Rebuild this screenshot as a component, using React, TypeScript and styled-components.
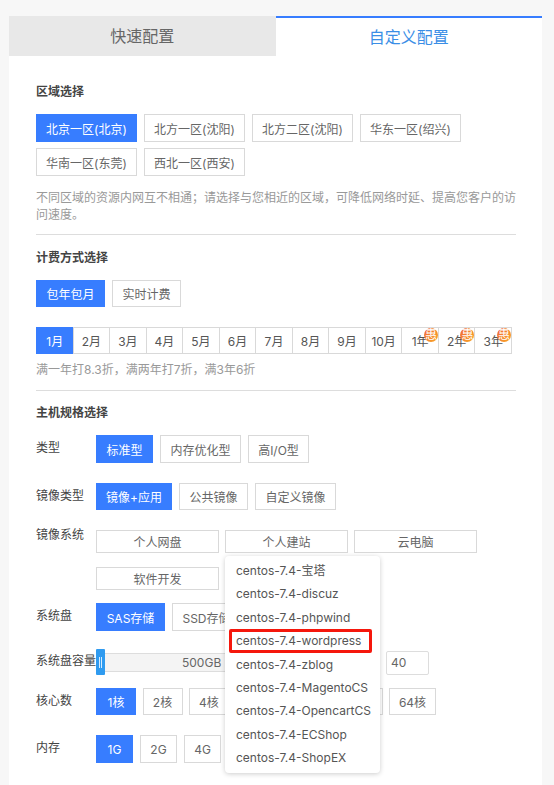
import React from "react";
import styled, { createGlobalStyle } from "styled-components";

const Global = createGlobalStyle`
  html, body { margin: 0; padding: 0; height: 785px; overflow: hidden; background: #f7f7f7; }
  body { font-family: Inter, "Noto Sans CJK SC", sans-serif; font-size: 12px; color: #666; }
  * { box-sizing: border-box; }
`;

const Page = styled.div`
  width: 533px;
  height: 769px;
  margin: 16px 0 0 9px;
  background: #fff;
  overflow: hidden;
`;
const Tabs = styled.div`
  display: flex;
  height: 40px;
`;
const Tab = styled.div<{ $active?: boolean }>`
  flex: 1;
  display: flex;
  align-items: center;
  justify-content: center;
  font-size: 16px;
  padding-bottom: ${(p) => (p.$active ? "3px" : "3px")};
  color: ${(p) => (p.$active ? "#3a8ee6" : "#666")};
  background: ${(p) => (p.$active ? "#fff" : "#e8e8e8")};
  border-top: ${(p) => (p.$active ? "2px solid #377dff" : "none")};
`;
const Body = styled.div`
  padding: 25px 26px 0 27px;
  display: flex;
  flex-direction: column;
`;
const Title = styled.div<{ $mt?: number }>`
  height: 20px;
  line-height: 22px;
  font-weight: 700;
  color: #444;
  margin-top: ${(p) => p.$mt ?? 0}px;
`;
const Wrap = styled.div<{ $mt?: number }>`
  display: flex;
  flex-wrap: wrap;
  gap: 6px 7px;
  margin-top: ${(p) => p.$mt ?? 0}px;
`;
const Chip = styled.div<{ $w: number; $h?: number; $active?: boolean }>`
  width: ${(p) => p.$w}px;
  height: ${(p) => p.$h ?? 28}px;
  flex: none;
  display: flex;
  align-items: center;
  justify-content: center;
  white-space: nowrap;
  border: 1px solid ${(p) => (p.$active ? "#377dff" : "#d9d9d9")};
  background: ${(p) => (p.$active ? "#377dff" : "#fff")};
  color: ${(p) => (p.$active ? "#fff" : "#666")};
`;
const Hint = styled.div<{ $mt: number }>`
  color: #999;
  line-height: 17px;
  margin-top: ${(p) => p.$mt}px;
`;
const Divider = styled.div<{ $mt: number }>`
  height: 1px;
  background: #ddd;
  margin-top: ${(p) => p.$mt}px;
`;
const Months = styled.div`
  display: grid;
  grid-template-columns: repeat(13, 1fr);
  width: 476px;
  height: 27px;
  margin-top: 20px;
  border: 1px solid #d9d9d9;
  border-left: none;
`;
const Month = styled.div<{ $active?: boolean }>`
  position: relative;
  display: flex;
  align-items: center;
  justify-content: center;
  margin-top: ${(p) => (p.$active ? "-1px" : "0")};
  margin-bottom: ${(p) => (p.$active ? "-1px" : "0")};
  border-left: 1px solid ${(p) => (p.$active ? "#377dff" : "#d9d9d9")};
  background: ${(p) => (p.$active ? "#377dff" : "#fff")};
  color: ${(p) => (p.$active ? "#fff" : "#555")};
`;
const Badge = styled.span`
  position: absolute;
  top: 0;
  right: 0;
  width: 14px;
  height: 14px;
  border-radius: 50%;
  background: linear-gradient(135deg, #f0663a, #f9a825);
  color: #fff;
  font-size: 12px;
  line-height: 13px;
  text-align: center;
`;
const Row = styled.div<{ $mt: number; $top?: boolean }>`
  display: flex;
  align-items: ${(p) => (p.$top ? "flex-start" : "center")};
  margin-top: ${(p) => p.$mt}px;
`;
const Label = styled.div<{ $top?: boolean }>`
  width: 60px;
  flex: none;
  color: #444;
  white-space: nowrap;
  line-height: 17px;
  margin-top: ${(p) => (p.$top ? "-4px" : "-3px")};
`;
const Chips = styled.div<{ $gap?: number }>`
  display: flex;
  gap: ${(p) => p.$gap ?? 7}px;
`;
const SystemGrid = styled.div`
  display: grid;
  grid-template-columns: repeat(3, 123px);
  grid-auto-rows: 23px;
  gap: 14px 6px;
`;
const SystemCell = styled.div`
  position: relative;
  display: flex;
  align-items: center;
  justify-content: center;
  border: 1px solid #d9d9d9;
  color: #666;
`;
const Menu = styled.div`
  position: absolute;
  z-index: 5;
  top: 25px;
  left: -1px;
  width: 155px;
  height: 217px;
  padding: 3px 0;
  background: #fff;
  border-radius: 4px;
  box-shadow: 0 1px 5px rgba(0, 0, 0, 0.2);
`;
const MenuItem = styled.div`
  position: relative;
  height: 23.4px;
  line-height: 23.4px;
  padding-left: 11px;
  color: #555;
  white-space: nowrap;
`;
const Highlight = styled.span`
  position: absolute;
  left: 4px;
  top: 0;
  width: 143px;
  height: 24px;
  border: 3px solid #f5170c;
  border-radius: 2px;
`;
const SliderBox = styled.div`
  display: flex;
  align-items: center;
  gap: 6px;
  height: 26px;
`;
const Track = styled.div`
  position: relative;
  width: 275px;
  height: 19px;
  background: #f4f4f4;
  border-top: 1px solid #ddd;
  border-bottom: 1px solid #ddd;
  display: flex;
  align-items: center;
  padding-left: 77px;
  color: #666;
`;
const Handle = styled.div`
  position: relative;
  width: 9px;
  height: 26px;
  border-radius: 1px;
  flex: none;
  background: #2f9bf0;
  display: flex;
  align-items: center;
  justify-content: center;
  gap: 1px;
`;
const Grip = styled.i`
  width: 1px;
  height: 11px;
  background: #d5ecff;
`;
const SliderRail = styled.div`
  display: flex;
  align-items: center;
`;
const NumberBox = styled.div`
  width: 43px;
  height: 24px;
  border: 1px solid #ddd;
  border-radius: 2px;
  padding-left: 4px;
  line-height: 22px;
  color: #666;
  margin-top: 1px;
`;

const regions = [["北京一区(北京)", true], ["北方一区(沈阳)"], ["北方二区(沈阳)"], ["华东一区(绍兴)"], ["华南一区(东莞)"], ["西北一区(西安)"]] as [string, boolean?][];
const months = ["1月", "2月", "3月", "4月", "5月", "6月", "7月", "8月", "9月", "10月", "1年", "2年", "3年"];
const images = ["宝塔", "discuz", "phpwind", "wordpress", "zblog", "MagentoCS", "OpencartCS", "ECShop", "ShopEX"];

export default function App() {
  return (
    <Page>
      <Global />
      <Tabs>
        <Tab>快速配置</Tab>
        <Tab $active>自定义配置</Tab>
      </Tabs>
      <Body>
        <Title>区域选择</Title>
        <Wrap $mt={13}>
          {regions.map(([r, a]) => (
            <Chip key={r} $w={101} $active={a}>{r}</Chip>
          ))}
        </Wrap>
        <Hint $mt={13}>不同区域的资源内网互不相通；请选择与您相近的区域，可降低网络时延、提高您客户的访问速度。</Hint>
        <Divider $mt={11} />
        <Title $mt={12}>计费方式选择</Title>
        <Wrap $mt={13}>
          <Chip $w={69} $h={27} $active>包年包月</Chip>
          <Chip $w={69} $h={27}>实时计费</Chip>
        </Wrap>
        <Months>
          {months.map((m, i) => (
            <Month key={m} $active={i === 0}>
              {m}
              {i > 9 && <Badge>惠</Badge>}
            </Month>
          ))}
        </Months>
        <Hint $mt={7}>满一年打8.3折，满两年打7折，满3年6折</Hint>
        <Divider $mt={12} />
        <Title $mt={11}>主机规格选择</Title>
        <Row $mt={13}>
          <Label>类型</Label>
          <Chips>
            <Chip $w={57} $active>标准型</Chip>
            <Chip $w={81}>内存优化型</Chip>
            <Chip $w={61}>高I/O型</Chip>
          </Chips>
        </Row>
        <Row $mt={20}>
          <Label>镜像类型</Label>
          <Chips>
            <Chip $w={76} $h={27} $active>镜像+应用</Chip>
            <Chip $w={69} $h={27}>公共镜像</Chip>
            <Chip $w={81} $h={27}>自定义镜像</Chip>
          </Chips>
        </Row>
        <Row $mt={20} $top>
          <Label $top>镜像系统</Label>
          <SystemGrid>
            <SystemCell>个人网盘</SystemCell>
            <SystemCell>
              个人建站
              <Menu>
                {images.map((n) => (
                  <MenuItem key={n}>
                    centos-7.4-{n}
                    {n === "wordpress" && <Highlight />}
                  </MenuItem>
                ))}
              </Menu>
            </SystemCell>
            <SystemCell>云电脑</SystemCell>
            <SystemCell>软件开发</SystemCell>
          </SystemGrid>
        </Row>
        <Row $mt={13}>
          <Label>系统盘</Label>
          <Chips>
            <Chip $w={69} $active>SAS存储</Chip>
            <Chip $w={69}>SSD存储</Chip>
          </Chips>
        </Row>
        <Row $mt={18}>
          <Label>系统盘容量</Label>
          <SliderBox>
            <SliderRail>
              <Handle><Grip /><Grip /></Handle>
              <Track>500GB</Track>
            </SliderRail>
            <NumberBox>40</NumberBox>
          </SliderBox>
        </Row>
        <Row $mt={13}>
          <Label>核心数</Label>
          <Chips $gap={6.5}>
            <Chip $w={40} $h={27} $active>1核</Chip>
            <Chip $w={40} $h={27}>2核</Chip>
            <Chip $w={40} $h={27}>4核</Chip>
            <Chip $w={40} $h={27}>8核</Chip>
            <Chip $w={47} $h={27}>16核</Chip>
            <Chip $w={47} $h={27}>32核</Chip>
            <Chip $w={47} $h={27}>64核</Chip>
          </Chips>
        </Row>
        <Row $mt={20}>
          <Label>内存</Label>
          <Chips>
            <Chip $w={37} $active>1G</Chip>
            <Chip $w={37}>2G</Chip>
            <Chip $w={37}>4G</Chip>
            <Chip $w={37}>8G</Chip>
          </Chips>
        </Row>
      </Body>
    </Page>
  );
}
